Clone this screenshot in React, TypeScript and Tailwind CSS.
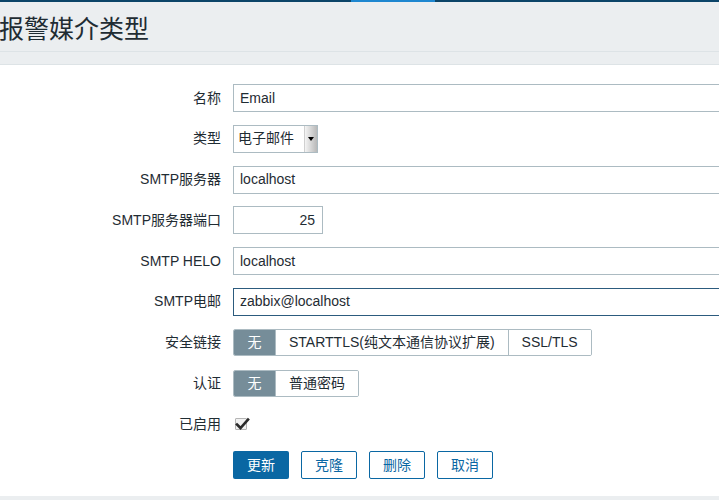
import React from "react";

const font = { fontFamily: '"Liberation Sans", "Noto Sans CJK SC", sans-serif' };

function Label({ children }: { children: React.ReactNode }) {
  return (
    <div className="w-[221px] shrink-0 text-right text-[14px] text-[#1f2c33]">{children}</div>
  );
}

function Row({ label, children }: { label: string; children: React.ReactNode }) {
  return (
    <div className="flex h-[28px] items-center gap-[12px]">
      <Label>{label}</Label>
      <div className="flex h-full items-center">{children}</div>
    </div>
  );
}

function TextInput({ value, focused }: { value: string; focused?: boolean }) {
  return (
    <div
      className={
        "flex h-[28px] w-[520px] items-center border bg-white px-[6px] text-[14px] text-[#1f2c33] " +
        (focused ? "border-[#2c5b7e]" : "border-[#acbbc2]")
      }
    >
      {value}
    </div>
  );
}

function Segmented({ items }: { items: string[] }) {
  return (
    <div className="flex h-[27px] overflow-hidden rounded-[2px] border border-[#acbbc2]">
      {items.map((it, i) => (
        <div
          key={it}
          className={
            "flex h-full items-center justify-center text-[14px] " +
            (i === 0
              ? "w-[41px] bg-[#768d99] text-white"
              : "border-l border-[#acbbc2] bg-white px-[13px] text-[#1f2c33]")
          }
        >
          {it}
        </div>
      ))}
    </div>
  );
}

export default function App() {
  return (
    <div className="relative h-[500px] w-[719px] overflow-hidden bg-white" style={font}>
      <div className="relative h-[2px] w-full bg-[#0b4468]">
        <div className="absolute left-[351px] top-0 h-[2px] w-[84px] bg-[#1e87d0]" />
      </div>
      <div className="flex h-[50px] items-center border-b border-[#dde3e6] bg-[#ebeef0] pt-[2px]">
        <h1
          className="-ml-[1px] text-[25px] font-normal leading-none text-[#1f2c33]"
          style={{ fontFamily: '"Noto Sans CJK SC", sans-serif' }}
        >
          报警媒介类型
        </h1>
      </div>
      <div className="h-[13px] border-b border-[#dde3e6] bg-[#ebeef0]" />

      <div className="flex flex-col gap-[12.8px] pt-[19px]">
        <Row label="名称">
          <TextInput value="Email" />
        </Row>
        <Row label="类型">
          <div className="flex h-[28px] w-[85px] items-center border border-[#acbbc2] bg-white pl-[4px] text-[14px] text-[#1f2c33]">
            <span className="flex-1">电子邮件</span>
            <div className="flex h-[26px] w-[13px] items-center justify-center border-l border-[#d0d0d0] bg-gradient-to-r from-[#f4f4f4] to-[#b8b8b8]">
              <div className="h-0 w-0 border-x-[3px] border-t-[4px] border-x-transparent border-t-black" />
            </div>
          </div>
        </Row>
        <Row label="SMTP服务器">
          <TextInput value="localhost" />
        </Row>
        <Row label="SMTP服务器端口">
          <div className="flex h-[28px] w-[90px] items-center justify-end border border-[#acbbc2] bg-white px-[7px] text-[14px] text-[#1f2c33]">
            25
          </div>
        </Row>
        <Row label="SMTP HELO">
          <TextInput value="localhost" />
        </Row>
        <Row label="SMTP电邮">
          <TextInput value="zabbix@localhost" focused />
        </Row>
        <Row label="安全链接">
          <Segmented items={["无", "STARTTLS(纯文本通信协议扩展)", "SSL/TLS"]} />
        </Row>
        <Row label="认证">
          <Segmented items={["无", "普通密码"]} />
        </Row>
        <Row label="已启用">
          <div className="relative ml-[2px] h-[12px] w-[12px] rounded-[1px] border border-[#b5b5b5] bg-[#f2f2f2]">
            <svg className="absolute -left-[1px] -top-[2px]" width="15" height="14" viewBox="0 0 15 14">
              <path d="M2 7.5 L5.5 11 L13 2.5" fill="none" stroke="#2b2b2b" strokeWidth="2.6" strokeLinecap="square" />
            </svg>
          </div>
        </Row>
        <div className="flex h-[28px] items-center gap-[12px] pl-[233px]">
          <div className="flex h-[28px] w-[56px] items-center justify-center rounded-[2px] bg-[#0a67a3] text-[14px] text-white">
            更新
          </div>
          {["克隆", "删除", "取消"].map((t) => (
            <div
              key={t}
              className="flex h-[28px] w-[56px] items-center justify-center rounded-[2px] border border-[#0a67a3] bg-white text-[14px] text-[#0a67a3]"
            >
              {t}
            </div>
          ))}
        </div>
      </div>
      <div className="absolute bottom-0 left-0 h-[4px] w-full bg-[#ebeef0]" />
    </div>
  );
}
